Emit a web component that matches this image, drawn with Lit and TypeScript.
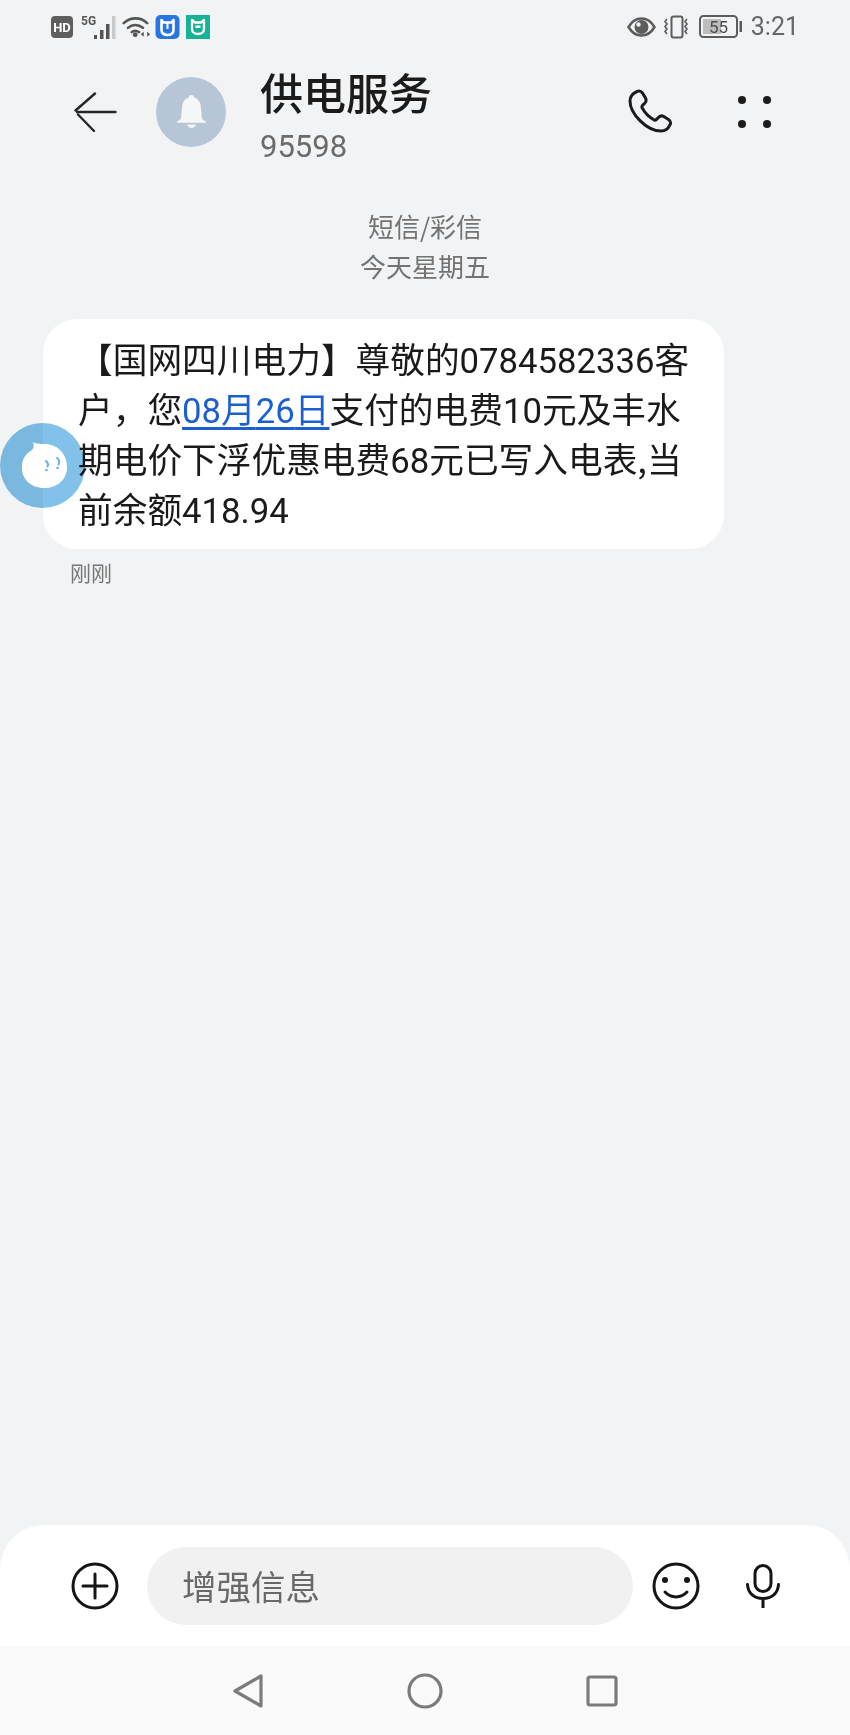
import { LitElement, html, css } from "lit";
import { customElement } from "lit/decorators.js";

@customElement("app-root")
export class AppRoot extends LitElement {
  static styles = css`
    :host { display: block; width: 850px; height: 1735px; background: #f1f3f5; font-family: "Noto Sans CJK SC", Roboto, "Noto Sans", sans-serif; position: relative; overflow: hidden; }
    .page { display: flex; flex-direction: column; height: 100%; }
    svg { display: block; flex: none; }
    .status { display: flex; align-items: center; height: 54px; padding: 0 51px 0 51px; }
    .status .left { display: flex; align-items: center; }
    .status .right { margin-left: auto; display: flex; align-items: center; }
    .time { font-family: Roboto, sans-serif; font-size: 25px; color: #666; margin-left: 8px; line-height: 54px; }
    .header { display: flex; align-items: center; height: 116px; padding: 0 0 0 73px; }
    .avatar { width: 70px; height: 70px; border-radius: 50%; background: #b6c6d6; display: flex; align-items: center; justify-content: center; margin-left: 39px; }
    .titles { margin-left: 34px; display: flex; flex-direction: column; margin-top: 6px; }
    .title { font-size: 43px; line-height: 52px; color: #1b1b1b; font-weight: 500; }
    .sub { font-family: Roboto, sans-serif; font-size: 31px; line-height: 36px; margin-top: 12px; color: #6a6a6a; }
    .actions { margin-left: auto; display: flex; align-items: center; padding-right: 79px; gap: 66px; }
    .content { flex: 1; padding-top: 36px; }
    .meta { text-align: center; font-size: 26px; line-height: 40px; height: 40px; color: #737373; }
    .bubble { margin: 33px 126px 0 43px; background: #fff; border-radius: 34px; padding: 14px 30px 15px 35px; font-size: 34.7px; line-height: 50px; color: #1a1a1a; height: 230px; box-sizing: border-box; }
    .num { font-family: Roboto, sans-serif; line-height: 1; }
    .bubble a { color: #1c5fd0; text-decoration: underline; text-underline-offset: 4px; line-height: 1; }
    .stamp { font-size: 21px; line-height: 30px; height: 30px; color: #777; margin: 8px 0 0 70px; }
    .float { position: absolute; left: 0; top: 423px; width: 85px; height: 85px; display: flex; align-items: center; justify-content: center; }
    .float::before { content: ""; position: absolute; inset: 0; border-radius: 50%; background: #82c1ea; mix-blend-mode: multiply; }
    .float svg { position: relative; }
    .composer { background: #fff; border-radius: 44px 44px 0 0; height: 121px; display: flex; align-items: center; padding: 0 0 0 71px; box-sizing: border-box; }
    .input { margin-left: 28px; width: 486px; height: 78px; border-radius: 39px; background: #f1f1f2; box-sizing: border-box; padding-left: 35px; font-size: 34.5px; line-height: 76px; color: #696969; }
    .smile { margin-left: 19px; }
    .mic { margin-left: 46px; }
    .nav { background: #fafafa; height: 89px; display: flex; align-items: center; justify-content: center; }
    .nav > div { width: 177px; display: flex; justify-content: center; }
  `;

  private statusLeft() {
    return html`
      <svg width="22" height="22" viewBox="0 0 22 22"><rect width="22" height="22" rx="4" fill="#5e5e5e"/><text x="11" y="16" text-anchor="middle" font-family="Roboto" font-weight="700" font-size="13" fill="#fff">HD</text></svg>
      <svg width="38" height="26" viewBox="0 0 38 26" style="margin-left:8px">
        <text x="0" y="11" font-family="Roboto" font-weight="700" font-size="12" fill="#555">5G</text>
        <rect x="13" y="21" width="3" height="4" fill="#555"/><rect x="19" y="16" width="3.5" height="9" fill="#555"/><rect x="25" y="10" width="3.5" height="15" fill="#555"/><rect x="31" y="2" width="3.5" height="23" fill="#c9c9c9"/>
      </svg>
      <svg width="29" height="22" viewBox="0 0 34 24" style="margin-left:3px">
        <path d="M2 7.500C10 0 22 0 29.500 7.500M7 13c5-4.500 12-4.500 17.500 0M11.500 18c2.500-2 5.500-2 8.500 0" fill="none" stroke="#555" stroke-width="3" stroke-linecap="round"/>
        <circle cx="15.500" cy="21" r="2.800" fill="#555"/><path d="M22 20.500l3.500-3v6zM33 20.500l-3.500-3v6z" fill="#555"/>
      </svg>
      <svg width="25" height="24" viewBox="0 0 24 24" style="margin-left:4px">
        <rect width="24" height="24" rx="5" fill="#2a76e0"/>
        <path d="M6 5l2 2.500h8L18 5v10c0 3-2.500 5-6 5s-6-2-6-5z" fill="none" stroke="#fff" stroke-width="2.600" stroke-linejoin="round"/>
        <rect x="11" y="8" width="2" height="6" fill="#fff"/>
      </svg>
      <svg width="24" height="24" viewBox="0 0 24 24" style="margin-left:6px">
        <rect width="24" height="24" fill="#16b296"/>
        <path d="M6 5l3 2.500h6L18 5v9c0 3-2.500 5-6 5s-6-2-6-5z" fill="none" stroke="#fff" stroke-width="2.300" stroke-linejoin="round"/>
        <rect x="9.500" y="10.500" width="5" height="2.500" fill="#fff"/>
      </svg>`;
  }

  private statusRight() {
    return html`
      <svg width="29" height="20" viewBox="0 0 29 20">
        <path d="M1.500 10C5 4 9.500 1.500 14.500 1.500S24 4 27.500 10C24 16 19.500 18.500 14.500 18.500S5 16 1.500 10z" fill="none" stroke="#5c5c5c" stroke-width="2.500"/>
        <circle cx="14.500" cy="10" r="7" fill="#5c5c5c"/><circle cx="11.500" cy="7.500" r="2.200" fill="#f1f3f5"/>
      </svg>
      <svg width="28" height="24" viewBox="0 0 28 24" style="margin-left:7px">
        <rect x="8.500" y="1.500" width="11" height="21" rx="2" fill="none" stroke="#5c5c5c" stroke-width="2"/>
        <path d="M4 4l-2 2.500 2 2.500-2 2.500 2 2.500-2 2.500 2 2.500M24 4l-2 2.500 2 2.500-2 2.500 2 2.500-2 2.500 2 2.500" fill="none" stroke="#5c5c5c" stroke-width="1.600"/>
      </svg>
      <svg width="44" height="24" viewBox="0 0 44 24" style="margin-left:8px">
        <rect x="1" y="1" width="37" height="21" rx="3.500" fill="none" stroke="#5c5c5c" stroke-width="2"/>
        <rect x="4" y="4" width="18" height="15" fill="#bdbdbd"/>
        <rect x="40.500" y="6" width="2.500" height="11" fill="#5c5c5c"/>
        <text x="19.500" y="18" text-anchor="middle" font-family="Roboto" font-size="17" fill="#4d4d4d">55</text>
      </svg>`;
  }

  render() {
    return html`
      <div class="page">
        <div class="status">
          <div class="left">${this.statusLeft()}</div>
          <div class="right">${this.statusRight()}<span class="time">3:21</span></div>
        </div>
        <div class="header">
          <svg width="44" height="40" viewBox="0 0 44 40"><path d="M4 20h38.500M22 1.500L2.500 18.500M5 22.500L21 39" fill="none" stroke="#262626" stroke-width="2.400" stroke-linecap="round" stroke-linejoin="round"/></svg>
          <div class="avatar">
            <svg width="33" height="36" viewBox="0 0 34 40">
              <path d="M17 1c2 0 3 1.500 3 3 5 1.500 7 5.500 7.500 11l1 11c.3 2 1.500 3 4.500 4.200V32H1v-1.800C4 29 5.200 28 5.500 26l1-11C7 9.500 9 5.500 14 4c0-1.500 1-3 3-3z" fill="#f4f6f8"/>
              <path d="M12 34h10c-1 2.500-3 4-5 4s-4-1.500-5-4z" fill="#f4f6f8"/>
            </svg>
          </div>
          <div class="titles">
            <div class="title">供电服务</div>
            <div class="sub">95598</div>
          </div>
          <div class="actions">
            <svg width="46" height="46" viewBox="0 0 46 46">
              <path d="M10 2.500c2-1 4-.5 5.500 1.500l3 5c1 2 .8 3.500-.6 5l-2.400 2.400c-.7.800-.8 1.700-.3 2.700 2.800 5 6.800 9 11.600 11.700 1 .5 1.900.4 2.700-.4l2.300-2.300c1.500-1.400 3.200-1.600 5-.6l4.700 3c2 1.300 2.500 3.300 1.500 5.400-1.800 3.800-5.200 6.200-9 6.200C20 42 3 25 3 12c0-4 2.500-7.600 7-9.500z" fill="none" stroke="#1c1c1c" stroke-width="3"/>
            </svg>
            <svg width="34" height="34" viewBox="0 0 34 34" style="margin-left:-2px">
              <circle cx="5" cy="5" r="4" fill="#1c1c1c"/><circle cx="30" cy="5" r="4" fill="#1c1c1c"/><circle cx="5" cy="29" r="4" fill="#1c1c1c"/><circle cx="30" cy="29" r="4" fill="#1c1c1c"/>
            </svg>
          </div>
        </div>
        <div class="content">
          <div class="meta">短信/彩信</div>
          <div class="meta">今天星期五</div>
          <div class="bubble">【国网四川电力】尊敬的<span class="num">0784582336</span>客户，您<a><span class="num">08</span>月<span class="num">26</span>日</a>支付的电费<span class="num">10</span>元及丰水期电价下浮优惠电费<span class="num">68</span>元已写入电表,当前余额<span class="num">418.94</span></div>
          <div class="stamp">刚刚</div>
        </div>
        <div class="composer">
          <svg width="48" height="48" viewBox="0 0 48 48"><circle cx="24" cy="24" r="22" fill="none" stroke="#151515" stroke-width="3"/><path d="M12 24h24M24 12v24" stroke="#151515" stroke-width="3" stroke-linecap="round"/></svg>
          <div class="input">增强信息</div>
          <svg class="smile" width="48" height="48" viewBox="0 0 48 48"><circle cx="24" cy="24" r="22" fill="none" stroke="#151515" stroke-width="3"/><circle cx="13" cy="18" r="3" fill="#151515"/><circle cx="35" cy="18" r="3" fill="#151515"/><path d="M13 30c6 6.500 16 6.500 22 0" fill="none" stroke="#151515" stroke-width="3" stroke-linecap="round"/></svg>
          <svg class="mic" width="34" height="44" viewBox="0 0 34 44"><rect x="9" y="1.500" width="16" height="26" rx="8" fill="none" stroke="#151515" stroke-width="3"/><path d="M1.500 20.500c.5 9 7 14 15.500 14s15-5 15.500-14M17 35v9" fill="none" stroke="#151515" stroke-width="3" stroke-linecap="round"/></svg>
        </div>
        <div class="nav">
          <div><svg width="32" height="36" viewBox="0 0 32 36"><path d="M29 3v30L3 18z" fill="none" stroke="#7b7b7b" stroke-width="3.200" stroke-linejoin="round"/></svg></div>
          <div><svg width="36" height="36" viewBox="0 0 36 36"><circle cx="18" cy="18" r="16" fill="none" stroke="#7b7b7b" stroke-width="3.200"/></svg></div>
          <div><svg width="32" height="32" viewBox="0 0 32 32"><rect x="2" y="2" width="28" height="28" rx="2" fill="none" stroke="#7b7b7b" stroke-width="3.200"/></svg></div>
        </div>
      </div>
      <div class="float">
        <svg width="50" height="50" viewBox="0 0 50 50">
          <path d="M15 1C18 3 24 3 28 3.100C40 4 49 13 49 26C49 39 39 47 26 47C13 47 3 38 4 25C4 17 9 12 14 9C16 7 16 4 15 1z" fill="#fff"/>
          <path d="M28 20q3 2.500 1.500 5.500M39 17q3.500 3 1.500 6.500" fill="none" stroke="#6eb2e0" stroke-width="2" stroke-linecap="round"/>
          <circle cx="28.500" cy="29" r="1.300" fill="#6eb2e0"/><circle cx="39.500" cy="27" r="1.300" fill="#6eb2e0"/>
        </svg>
      </div>
    `;
  }
}
